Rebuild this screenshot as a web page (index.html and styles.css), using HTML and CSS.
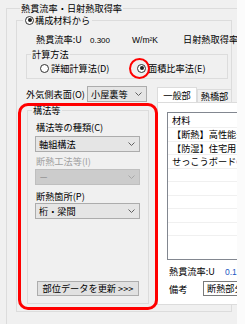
FILE: index.html
```html
<!DOCTYPE html>
<html lang="ja">
<head>
<meta charset="utf-8">
<link rel="stylesheet" href="styles.css">
</head>
<body>
<div class="page">
  <div class="app">
    <section class="gb gb-outer">
      <div class="gt gt-outer">熱貫流率・日射熱取得率</div>
      <section class="gb gb-struct">
        <div class="gt gt-struct"><span class="radio on"></span><span>構成材料から</span></div>
        <div class="urow">
          <span class="u-label">熱貫流率:U</span><span class="u-val">0.300</span><span class="u-unit">W/m²K</span><span class="u-shgc">日射熱取得率</span>
        </div>
        <section class="gb gb-calc">
          <div class="gt gt-calc">計算方法</div>
          <div class="radios">
            <label class="ropt ropt-1"><span class="radio"></span><span>詳細計算法(D)</span></label>
            <label class="ropt ropt-2"><span class="radio on"></span><span>面積比率法(E)</span><span class="ring-radio"></span></label>
          </div>
        </section>
        <div class="main">
          <div class="leftcol">
            <div class="surf-row">
              <span class="surf-label">外気側表面(O)</span>
              <div class="combo combo-surf"><span>小屋裏等</span><svg class="chev" width="7" height="4" viewBox="0 0 7 4"><path d="M0.5 0.5 L3.5 3.5 L6.5 0.5" fill="none" stroke="#606060" stroke-width="1"/></svg></div>
            </div>
            <div class="hl">
              <section class="gb gb-kouhou">
                <div class="gt gt-kouhou">構法等</div>
                <div class="flabel fl-1">構法等の種類(C)</div>
                <div class="combo combo-wide"><span>軸組構法</span><svg class="chev" width="7" height="4" viewBox="0 0 7 4"><path d="M0.5 0.5 L3.5 3.5 L6.5 0.5" fill="none" stroke="#606060" stroke-width="1"/></svg></div>
                <div class="flabel fl-2 disabled">断熱工法等(I)</div>
                <div class="combo combo-wide combo-dis"><span>－</span><svg class="chev" width="7" height="4" viewBox="0 0 7 4"><path d="M0.5 0.5 L3.5 3.5 L6.5 0.5" fill="none" stroke="#a8a8a8" stroke-width="1"/></svg></div>
                <div class="flabel fl-3">断熱箇所(P)</div>
                <div class="combo combo-wide"><span>桁・梁間</span><svg class="chev" width="7" height="4" viewBox="0 0 7 4"><path d="M0.5 0.5 L3.5 3.5 L6.5 0.5" fill="none" stroke="#606060" stroke-width="1"/></svg></div>
                <div class="btn">部位データを更新 &gt;&gt;&gt;</div>
              </section>
              <div class="hl-ring"></div>
            </div>
          </div>
          <div class="rightcol">
            <div class="tabs">
              <div class="tab tab-on">一般部</div>
              <div class="tab">熱橋部</div>
            </div>
            <div class="panel">
              <div class="list">
                <div class="li li-head">材料</div>
                <div class="li">【断熱】高性能グラスウール</div>
                <div class="li">【防湿】住宅用プラスチック</div>
                <div class="li">せっこうボード<span class="gb-code">GB-R</span></div>
                <div class="li"></div>
                <div class="li"></div>
                <div class="li"></div>
                <div class="li"></div>
                <div class="li"></div>
              </div>
              <div class="p-urow"><span class="p-ulabel">熱貫流率:U</span><span class="p-uval">0.1</span></div>
              <div class="p-note"><span class="p-nlabel">備考</span><div class="tbox">断熱部分</div></div>
            </div>
          </div>
        </div>
      </section>
    </section>
  </div>
  <div class="edge"></div>
</div>
</body>
</html>
```
FILE: styles.css
```css
* { box-sizing: border-box; }
html, body { margin: 0; padding: 0; }
body {
  background: #f0f0f0;
  font-family: "Noto Sans CJK JP", "Noto Sans", sans-serif;
  font-size: 9.2px;
  line-height: 12px;
  color: #000;
}
.page {
  width: 245px;
  height: 324px;
  overflow: hidden;
  display: flex;
}
.app {
  width: 237px;
  flex: none;
  height: 324px;
  overflow: hidden;
}
.edge {
  flex: 1;
  background: #fbfbfb;
}
/* group box */
.gb {
  border: 1px solid #dcdcdc;
}
.gt {
  margin-top: -7px;
  height: 12px;
  line-height: 12px;
  width: max-content;
  background: #f0f0f0;
  padding: 0 1px;
  white-space: nowrap;
}
.gb-outer {
  margin: 8px 0 0 6px;
  width: 300px;
  height: 340px;
  padding-left: 9px;
}
.gt-outer { margin-left: 4px; }
.gb-struct {
  margin-top: 6px;
  width: 216px;
}
.gt-struct {
  margin-left: 6px;
  padding: 0 2px;
  display: flex;
  align-items: center;
}
.radio {
  display: inline-block;
  width: 9px;
  height: 9px;
  border: 1px solid #333;
  border-radius: 50%;
  background: #fff;
  position: relative;
  margin-right: 1px;
  flex: none;
}
.radio.on::after {
  content: "";
  position: absolute;
  left: 1.5px;
  top: 1.5px;
  width: 4px;
  height: 4px;
  border-radius: 50%;
  background: #222;
}
.urow {
  margin: 7px 0 0 19px;
  display: flex;
  align-items: baseline;
  height: 12px;
  white-space: nowrap;
}
.u-label { width: 54px; flex: none; }
.u-val { font-family: "Liberation Sans", sans-serif; font-size: 8px; width: 42px; flex: none; }
.u-unit { font-family: "Liberation Sans", sans-serif; font-size: 8.5px; width: 51px; flex: none; }
.u-shgc { flex: none; }
.gb-calc {
  margin: 9px 0 0 9px;
  width: 202px;
  padding: 0 0 4px 13px;
}
.gt-calc { margin-left: 4px; margin-left: -9px; }
.radios { display: flex; height: 12px; margin-top: 2px; }
.ropt {
  display: flex;
  align-items: center;
  white-space: nowrap;
}
.ropt .radio { margin-right: 2px; }
.ropt-1 { width: 97px; }
.ropt-2 { position: relative; }
.ring-radio {
  position: absolute;
  left: -8px;
  top: -4px;
  width: 21px;
  height: 21px;
  border: 2px solid #ff0000;
  border-radius: 50%;
  pointer-events: none;
}
.main {
  display: flex;
  margin-top: 7px;
}
.leftcol { width: 140px; flex: none; }
.surf-row {
  display: flex;
  align-items: center;
  height: 16px;
  margin-left: 9px;
}
.surf-label { width: 61px; white-space: nowrap; }
.combo {
  display: flex;
  align-items: center;
  justify-content: space-between;
  height: 16px;
  background: #e5e5e5;
  border: 1px solid #acacac;
  padding: 0 4px 0 3px;
  white-space: nowrap;
}
.combo-surf { width: 60px; }
.combo-wide { width: 105px; margin-left: -1px; margin-top: 3px; }
.combo-dis { background: #cccccc; border-color: #bfbfbf; color: #8a8a8a; }
.hl {
  position: relative;
  padding-top: 8px;
  padding-bottom: 7px;
}
.gb-kouhou {
  margin-left: 10px;
  width: 122px;
  height: 194px;
  padding: 0 0 0 8px;
}
.gt-kouhou { margin-left: -4px; }
.flabel { line-height: 12px; white-space: nowrap; }
.fl-1 { margin-top: 5px; }
.fl-2 { margin-top: 3px; }
.fl-2 + .combo { margin-top: 2px; }
.fl-3 { margin-top: 5px; }
.fl-3 + .combo { margin-top: 1px; }
.disabled { color: #a0a0a0; }
.btn {
  margin: 62px 0 0 1px;
  width: 102px;
  height: 15px;
  background: #e1e1e1;
  border: 1px solid #adadad;
  line-height: 13px;
  text-align: center;
  white-space: nowrap;
}
.hl-ring {
  position: absolute;
  left: 1px;
  top: 1px;
  width: 140px;
  height: 207px;
  border: 3px solid #ff0000;
  border-radius: 10px;
  pointer-events: none;
}
.rightcol {
  flex: none;
  width: 90px;
  margin-top: 1px;
}
.tabs {
  display: flex;
  align-items: flex-end;
  height: 15px;
}
.tab {
  height: 13px;
  width: 35px;
  border: 1px solid #dcdcdc;
  border-bottom: none;
  line-height: 12px;
  text-align: center;
  background: #f0f0f0;
}
.tab-on {
  height: 15px;
  width: 40px;
  background: #fff;
  line-height: 14px;
}
.panel {
  border: 1px solid #dcdcdc;
  background: #fff;
  height: 203px;
  padding: 9px 0 0 9px;
}
.list {
  border: 1px solid #828790;
  height: 148px;
  background: #fff;
  overflow: hidden;
  border-right: none;
}
.li {
  height: 13.5px;
  line-height: 13px;
  border-bottom: 1px solid #f0f0f0;
  padding-left: 4px;
  white-space: nowrap;
  overflow: hidden;
}
.li-head { height: 15px; line-height: 14px; }
.gb-code { color: #2060c0; font-family: "Liberation Sans", sans-serif; font-size: 8.5px; }
.p-urow {
  margin: 5px 0 0 2px;
  height: 12px;
  display: flex;
  align-items: baseline;
  white-space: nowrap;
}
.p-ulabel { width: 56px; flex: none; }
.p-uval { color: #1a56c2; font-family: "Liberation Sans", sans-serif; font-size: 8.5px; }
.p-note {
  margin: 4px 0 0 2px;
  display: flex;
  align-items: center;
  height: 15px;
}
.p-nlabel { width: 34px; flex: none; }
.tbox {
  border: 1px solid #7a7a7a;
  background: #fff;
  height: 15px;
  width: 60px;
  flex: none;
  padding-left: 3px;
  line-height: 13px;
  white-space: nowrap;
}
```
